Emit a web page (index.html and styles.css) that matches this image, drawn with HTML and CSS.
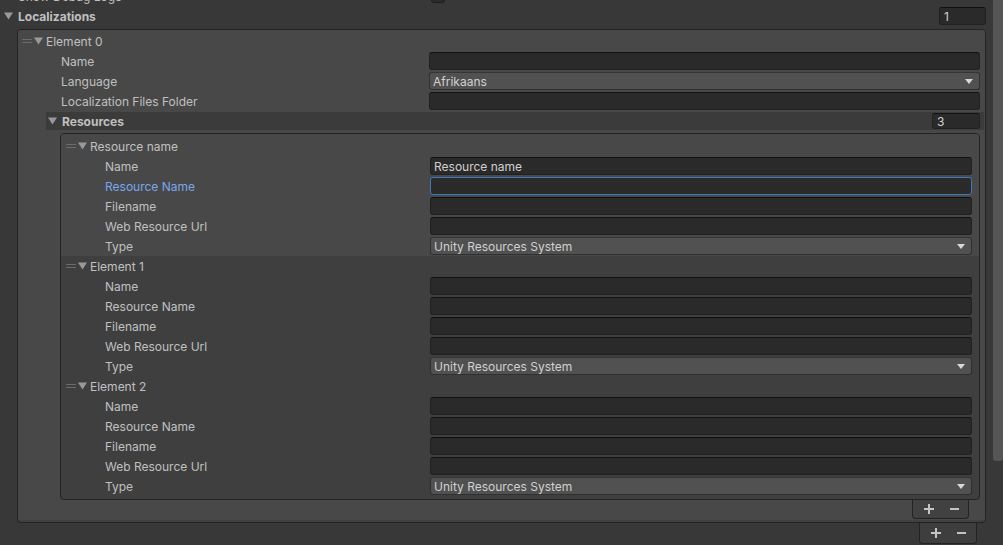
FILE: index.html
```html
<!DOCTYPE html>
<html>
<head>
<meta charset="utf-8">
<link rel="stylesheet" href="styles.css">
</head>
<body>
<div class="window">
  <div class="inspector">
    <div class="row top-row">
      <span class="top-label">Show Debug Logs</span>
      <span class="toggle"></span>
    </div>
    <div class="row fold-row">
      <svg class="tri" width="9" height="8" viewBox="0 0 9 8"><polygon points="0,0.5 9,0.5 4.5,7.5"/></svg>
      <span class="bold">Localizations</span>
      <span class="field size-field outer-size">1</span>
    </div>

    <div class="list outer-list">
      <div class="element selected outer-element">
        <div class="row el-head">
          <svg class="handle" width="10" height="5" viewBox="0 0 10 5"><rect x="0" y="0" width="10" height="1"/><rect x="0" y="3" width="10" height="1"/></svg>
          <svg class="tri" width="9" height="8" viewBox="0 0 9 8"><polygon points="0,0.5 9,0.5 4.5,7.5"/></svg>
          <span>Element 0</span>
        </div>
        <div class="row prop outer-prop"><span class="lbl">Name</span><span class="field"></span></div>
        <div class="row prop outer-prop"><span class="lbl">Language</span><span class="field popup"><span>Afrikaans</span><svg class="arrow" width="8" height="5" viewBox="0 0 8 5"><polygon points="0,0 8,0 4,5"/></svg></span></div>
        <div class="row prop outer-prop"><span class="lbl">Localization Files Folder</span><span class="field"></span></div>
        <div class="row sub-row">
          <div class="sub-bar">
            <svg class="tri" width="9" height="8" viewBox="0 0 9 8"><polygon points="0,0.5 9,0.5 4.5,7.5"/></svg>
            <span class="bold">Resources</span>
            <span class="field size-field inner-size">3</span>
          </div>
        </div>

        <div class="list inner-list">
          <div class="element selected first">
            <div class="row el-head inner-head">
              <svg class="handle" width="10" height="5" viewBox="0 0 10 5"><rect x="0" y="0" width="10" height="1"/><rect x="0" y="3" width="10" height="1"/></svg>
              <svg class="tri" width="9" height="8" viewBox="0 0 9 8"><polygon points="0,0.5 9,0.5 4.5,7.5"/></svg>
              <span>Resource name</span>
            </div>
            <div class="row prop inner-prop"><span class="lbl">Name</span><span class="field">Resource name</span></div>
            <div class="row prop inner-prop"><span class="lbl focused-lbl">Resource Name</span><span class="field focused"></span></div>
            <div class="row prop inner-prop"><span class="lbl">Filename</span><span class="field"></span></div>
            <div class="row prop inner-prop"><span class="lbl">Web Resource Url</span><span class="field"></span></div>
            <div class="row prop inner-prop"><span class="lbl">Type</span><span class="field popup"><span>Unity Resources System</span><svg class="arrow" width="8" height="5" viewBox="0 0 8 5"><polygon points="0,0 8,0 4,5"/></svg></span></div>
          </div>
          <div class="element">
            <div class="row el-head inner-head">
              <svg class="handle" width="10" height="5" viewBox="0 0 10 5"><rect x="0" y="0" width="10" height="1"/><rect x="0" y="3" width="10" height="1"/></svg>
              <svg class="tri" width="9" height="8" viewBox="0 0 9 8"><polygon points="0,0.5 9,0.5 4.5,7.5"/></svg>
              <span>Element 1</span>
            </div>
            <div class="row prop inner-prop"><span class="lbl">Name</span><span class="field"></span></div>
            <div class="row prop inner-prop"><span class="lbl">Resource Name</span><span class="field"></span></div>
            <div class="row prop inner-prop"><span class="lbl">Filename</span><span class="field"></span></div>
            <div class="row prop inner-prop"><span class="lbl">Web Resource Url</span><span class="field"></span></div>
            <div class="row prop inner-prop"><span class="lbl">Type</span><span class="field popup"><span>Unity Resources System</span><svg class="arrow" width="8" height="5" viewBox="0 0 8 5"><polygon points="0,0 8,0 4,5"/></svg></span></div>
          </div>
          <div class="element">
            <div class="row el-head inner-head">
              <svg class="handle" width="10" height="5" viewBox="0 0 10 5"><rect x="0" y="0" width="10" height="1"/><rect x="0" y="3" width="10" height="1"/></svg>
              <svg class="tri" width="9" height="8" viewBox="0 0 9 8"><polygon points="0,0.5 9,0.5 4.5,7.5"/></svg>
              <span>Element 2</span>
            </div>
            <div class="row prop inner-prop"><span class="lbl">Name</span><span class="field"></span></div>
            <div class="row prop inner-prop"><span class="lbl">Resource Name</span><span class="field"></span></div>
            <div class="row prop inner-prop"><span class="lbl">Filename</span><span class="field"></span></div>
            <div class="row prop inner-prop"><span class="lbl">Web Resource Url</span><span class="field"></span></div>
            <div class="row prop inner-prop"><span class="lbl">Type</span><span class="field popup"><span>Unity Resources System</span><svg class="arrow" width="8" height="5" viewBox="0 0 8 5"><polygon points="0,0 8,0 4,5"/></svg></span></div>
          </div>
        </div>
        <div class="footer inner-footer">
          <svg width="10" height="10" viewBox="0 0 10 10"><path d="M4 0h2v10H4z M0 4h10v2H0z"/></svg>
          <svg width="9" height="2" viewBox="0 0 9 2"><rect x="0" y="0" width="9" height="2"/></svg>
        </div>
      </div>
    </div>
    <div class="footer outer-footer">
      <svg width="10" height="10" viewBox="0 0 10 10"><path d="M4 0h2v10H4z M0 4h10v2H0z"/></svg>
      <svg width="9" height="2" viewBox="0 0 9 2"><rect x="0" y="0" width="9" height="2"/></svg>
    </div>
  </div>
  <div class="scrollbar"><div class="thumb"></div></div>
</div>
</body>
</html>
```

FILE: styles.css
```css
* { box-sizing: border-box; }
html, body { margin: 0; padding: 0; }
body {
  background: #383838;
  font-family: Inter, "Noto Sans", sans-serif;
  font-size: 12px;
  color: #c0c0c0;
  width: 1003px;
  height: 545px;
  overflow: hidden;
}
.window { display: flex; height: 545px; }
.inspector {
  width: 986px;
  margin-top: -14px;
  display: flex;
  flex-direction: column;
}
.scrollbar { width: 17px; padding-left: 7px; }
.thumb { height: 461px; background: #555555; border-radius: 0 0 3px 3px; }

.row { height: 20px; display: flex; align-items: center; flex-shrink: 0; }
.bold { font-weight: 700; }
.tri { fill: #999999; flex-shrink: 0; }
.handle { fill: #6c6c6c; flex-shrink: 0; }

.top-row { padding-left: 18px; }
.top-label { width: 413px; white-space: nowrap; }
.toggle {
  width: 14px; height: 14px;
  background: #2b2b2b; border: 1px solid #1c1c1c; border-radius: 3px;
}

.fold-row { padding-left: 4px; }
.fold-row .tri { margin-right: 5px; }

.field {
  height: 18px;
  background: #2a2a2a;
  border: 1px solid #212121;
  border-top-color: #111111;
  border-radius: 3px;
  color: #d0d0d0;
  padding-left: 3px;
  display: flex;
  align-items: center;
  white-space: nowrap;
}
.size-field { width: 47px; margin-left: auto; padding-left: 4px; }
.outer-size { height: 18px; }
.popup {
  background: #515151;
  border-color: #303030;
  border-top-color: #353535;
  justify-content: space-between;
  padding-right: 6px;
}
.arrow { fill: #d8d8d8; }
.focused { border-color: #3a79bb; }
.focused-lbl { color: #79a7ec; }

.list {
  border: 1px solid #232323;
  border-radius: 4px;
  background: #3f3f3f;
}
.outer-list {
  margin: 3px 0 0 17px;
  width: 969px;
  padding-bottom: 2px;
  background: #404040;
}
.element { display: flex; flex-direction: column; }
.selected { background: #484848; }
.outer-element { padding: 1px 0 1px; border-radius: 3px 3px 0 0; }

.el-head { padding-left: 4px; }
.el-head .handle { margin-right: 2px; }
.el-head .tri { margin-right: 3px; }
.inner-head { padding-left: 5px; }

.prop .lbl { flex-shrink: 0; white-space: nowrap; }
.prop .field { flex: 1; }
.outer-prop .lbl { width: 411px; padding-left: 43px; }
.outer-prop .field { margin-right: 5px; }

.sub-row { padding-left: 28px; padding-right: 1px; }
.sub-bar {
  flex: 1;
  height: 18px;
  background: #3b3b3b;
  display: flex;
  align-items: center;
  padding-left: 2px;
  padding-right: 4px;
}
.sub-bar .tri { margin-right: 5px; }
.inner-size { width: 48px; height: 16px; }

.inner-list {
  margin: 2px 5px 0 42px;
  padding-bottom: 3px;
}
.inner-list .first { padding-top: 2px; border-radius: 3px 3px 0 0; }
.inner-prop .lbl { width: 369px; padding-left: 44px; }
.inner-prop .field { margin-right: 7px; }

.footer {
  display: flex;
  align-items: center;
  gap: 16px;
  padding-left: 11px;
  background: #414141;
  border: 1px solid #232323;
  border-top: none;
  border-radius: 0 0 4px 4px;
  align-self: flex-end;
  flex-shrink: 0;
}
.footer svg { fill: #c4c4c4; }
.inner-footer { width: 57px; height: 19px; margin-right: 16px; }
.outer-footer { width: 58px; height: 21px; margin-right: 9px; background: #3e3e3e; }
```
